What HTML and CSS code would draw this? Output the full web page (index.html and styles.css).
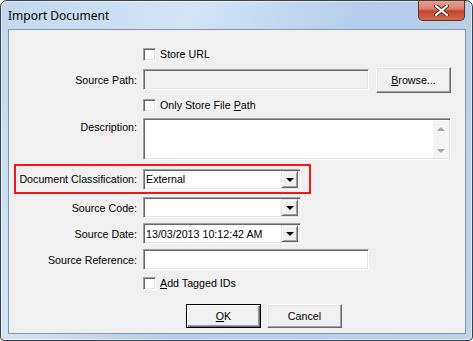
FILE: index.html
```html
<!DOCTYPE html>
<html lang="en">
  <head>
    <meta charset="UTF-8" />
    <title>Import Document</title>
    <link rel="stylesheet" href="styles.css">
  </head>
  <body>
    <div class="window">
      <div class="titlebar">
        <span class="title">Import Document</span>
        <div class="close">
          <svg width="15" height="11" viewBox="0 0 15 11">
            <path d="M2 1 L13 10 M13 1 L2 10" stroke="#5a2a22" stroke-width="4" stroke-linecap="square" />
            <path d="M2 1 L13 10 M13 1 L2 10" stroke="#ffffff" stroke-width="2" stroke-linecap="square" />
          </svg>
        </div>
      </div>

      <div class="client">
        <div class="row check-row first">
          <span class="label"></span>
          <span class="checkbox"></span>
          <span class="check-text">Store URL</span>
        </div>

        <div class="row path-row">
          <span class="label">Source Path:</span>
          <div class="field wide disabled"></div>
          <button class="btn browse"><u>B</u>rowse...</button>
        </div>

        <div class="row check-row">
          <span class="label"></span>
          <span class="checkbox"></span>
          <span class="check-text">Only Store File <u>P</u>ath</span>
        </div>

        <div class="row desc-row">
          <span class="label">Description:</span>
          <div class="field memo">
            <div class="scroll">
              <span class="arrow up"></span>
              <span class="arrow down"></span>
            </div>
          </div>
        </div>

        <div class="row highlight">
          <span class="label">Document Classification:</span>
          <div class="field combo">
            <span class="value">External</span>
            <span class="drop"><span class="tri"></span></span>
          </div>
        </div>

        <div class="row tight">
          <span class="label">Source Code:</span>
          <div class="field combo">
            <span class="value"></span>
            <span class="drop"><span class="tri"></span></span>
          </div>
        </div>

        <div class="row">
          <span class="label">Source Date:</span>
          <div class="field combo">
            <span class="value">13/03/2013 10:12:42 AM</span>
            <span class="drop"><span class="tri"></span></span>
          </div>
        </div>

        <div class="row">
          <span class="label">Source Reference:</span>
          <div class="field wide"></div>
        </div>

        <div class="row check-row">
          <span class="label"></span>
          <span class="checkbox"></span>
          <span class="check-text"><u>A</u>dd Tagged IDs</span>
        </div>

        <div class="buttons">
          <button class="btn default"><u>O</u>K</button>
          <button class="btn">Cancel</button>
        </div>
      </div>
    </div>
  </body>
</html>
```

FILE: styles.css
```css
body {
  margin: 0;
  font-family: "Liberation Sans", Arial, sans-serif;
  font-size: 10.7px;
  color: #000;
  background: #fff;
}

.window {
  width: 473px;
  height: 341px;
  box-sizing: border-box;
  border: 1px solid #3c4048;
  border-radius: 7px 7px 4px 4px;
  background: linear-gradient(120deg, #c2d7ee 0%, #d4e4f5 30%, #b4cde9 55%, #bcd3ec 100%);
  box-shadow: inset 0 0 0 1px rgba(255, 255, 255, 0.55);
  display: flex;
  flex-direction: column;
  overflow: hidden;
}

.titlebar {
  height: 28px;
  display: flex;
  justify-content: space-between;
  align-items: flex-start;
  padding: 0 7px 0 7px;
}

.title {
  font-family: "Noto Sans", "Liberation Sans", sans-serif;
  font-size: 12px;
  margin-top: 6px;
}

.close {
  width: 47px;
  height: 21px;
  margin-top: -1px;
  box-sizing: border-box;
  border: 1px solid #6b2a22;
  border-top: none;
  border-radius: 0 0 5px 5px;
  background: linear-gradient(to bottom, #e9a594 0%, #d8806c 45%, #c2452e 55%, #cf6a4e 100%);
  display: flex;
  align-items: center;
  justify-content: center;
}

.client {
  flex: 1;
  margin: 0 6px 6px 7px;
  border: 1px solid #8596ab;
  background: #f0f0f0;
  display: flex;
  flex-direction: column;
}

.row {
  display: flex;
  align-items: center;
  margin-top: 5px;
}

.row.first {
  margin-top: 16px;
}

.row.tight {
  margin-top: 3px;
}

.label {
  width: 128px;
  margin-right: 6px;
  flex: none;
  display: flex;
  justify-content: flex-end;
  white-space: nowrap;
}

.check-row {
  height: 16px;
}

.path-row {
  height: 25px;
}

.desc-row {
  align-items: flex-start;
}

.desc-row .label {
  padding-top: 3px;
}

.checkbox {
  width: 13px;
  height: 13px;
  box-sizing: border-box;
  background: #fff;
  border: 1px solid;
  border-color: #a0a0a0 #fff #fff #a0a0a0;
  box-shadow: inset 1px 1px 0 #696969, inset -1px -1px 0 #e3e3e3;
}

.check-text {
  margin-left: 4px;
}

.field {
  height: 21px;
  box-sizing: border-box;
  background: #fff;
  border: 1px solid;
  border-color: #a0a0a0 #fff #fff #a0a0a0;
  box-shadow: inset 1px 1px 0 #696969, inset -1px -1px 0 #e3e3e3;
  display: flex;
  align-items: center;
}

.field.wide {
  width: 226px;
}

.field.disabled {
  background: #f0f0f0;
}

.field.memo {
  width: 308px;
  height: 42px;
  justify-content: flex-end;
  align-items: stretch;
  padding: 2px 1px 1px 2px;
}

.scroll {
  width: 16px;
  background: #f4f4f4;
  display: flex;
  flex-direction: column;
  justify-content: space-between;
  align-items: center;
  padding: 6px 0 5px;
}

.arrow {
  width: 0;
  height: 0;
  border-left: 4px solid transparent;
  border-right: 4px solid transparent;
}

.arrow.up {
  border-bottom: 4px solid #a6a6a6;
}

.arrow.down {
  border-top: 4px solid #a6a6a6;
}

.field.combo {
  width: 158px;
  padding: 2px;
  justify-content: space-between;
}

.drop {
  width: 17px;
  height: 17px;
  box-sizing: border-box;
  background: #f0f0f0;
  border: 1px solid;
  border-color: #e3e3e3 #696969 #696969 #e3e3e3;
  box-shadow: inset 1px 1px 0 #fff, inset -1px -1px 0 #a0a0a0;
  display: flex;
  align-items: center;
  justify-content: center;
}

.tri {
  width: 0;
  height: 0;
  border-left: 4px solid transparent;
  border-right: 4px solid transparent;
  border-top: 4px solid #000;
  margin-top: 1px;
}

.highlight {
  margin-left: 5px;
  margin-top: 4px;
  width: 297px;
  height: 30px;
  box-sizing: border-box;
  border: 2px solid #f01818;
  padding-right: 8px;
}

.highlight .label {
  width: 121px;
}

.btn {
  font-family: "Liberation Sans", Arial, sans-serif;
  font-size: 10.7px;
  color: #000;
  width: 75px;
  height: 25px;
  padding: 0;
  background: #f0f0f0;
  border: 1px solid;
  border-color: #fff #696969 #696969 #fff;
  box-shadow: inset -1px -1px 0 #a0a0a0, inset 1px 1px 0 #e3e3e3;
}

.browse {
  margin-left: 7px;
  height: 26px;
}

.buttons {
  display: flex;
  gap: 6px;
  padding-left: 177px;
  margin-top: 13px;
}

.buttons .btn {
  height: 24px;
}

.btn.default {
  border: 1px solid #000;
  box-shadow: inset 1px 1px 0 #fff, inset -1px -1px 0 #696969, inset -2px -2px 0 #a0a0a0;
}
```
